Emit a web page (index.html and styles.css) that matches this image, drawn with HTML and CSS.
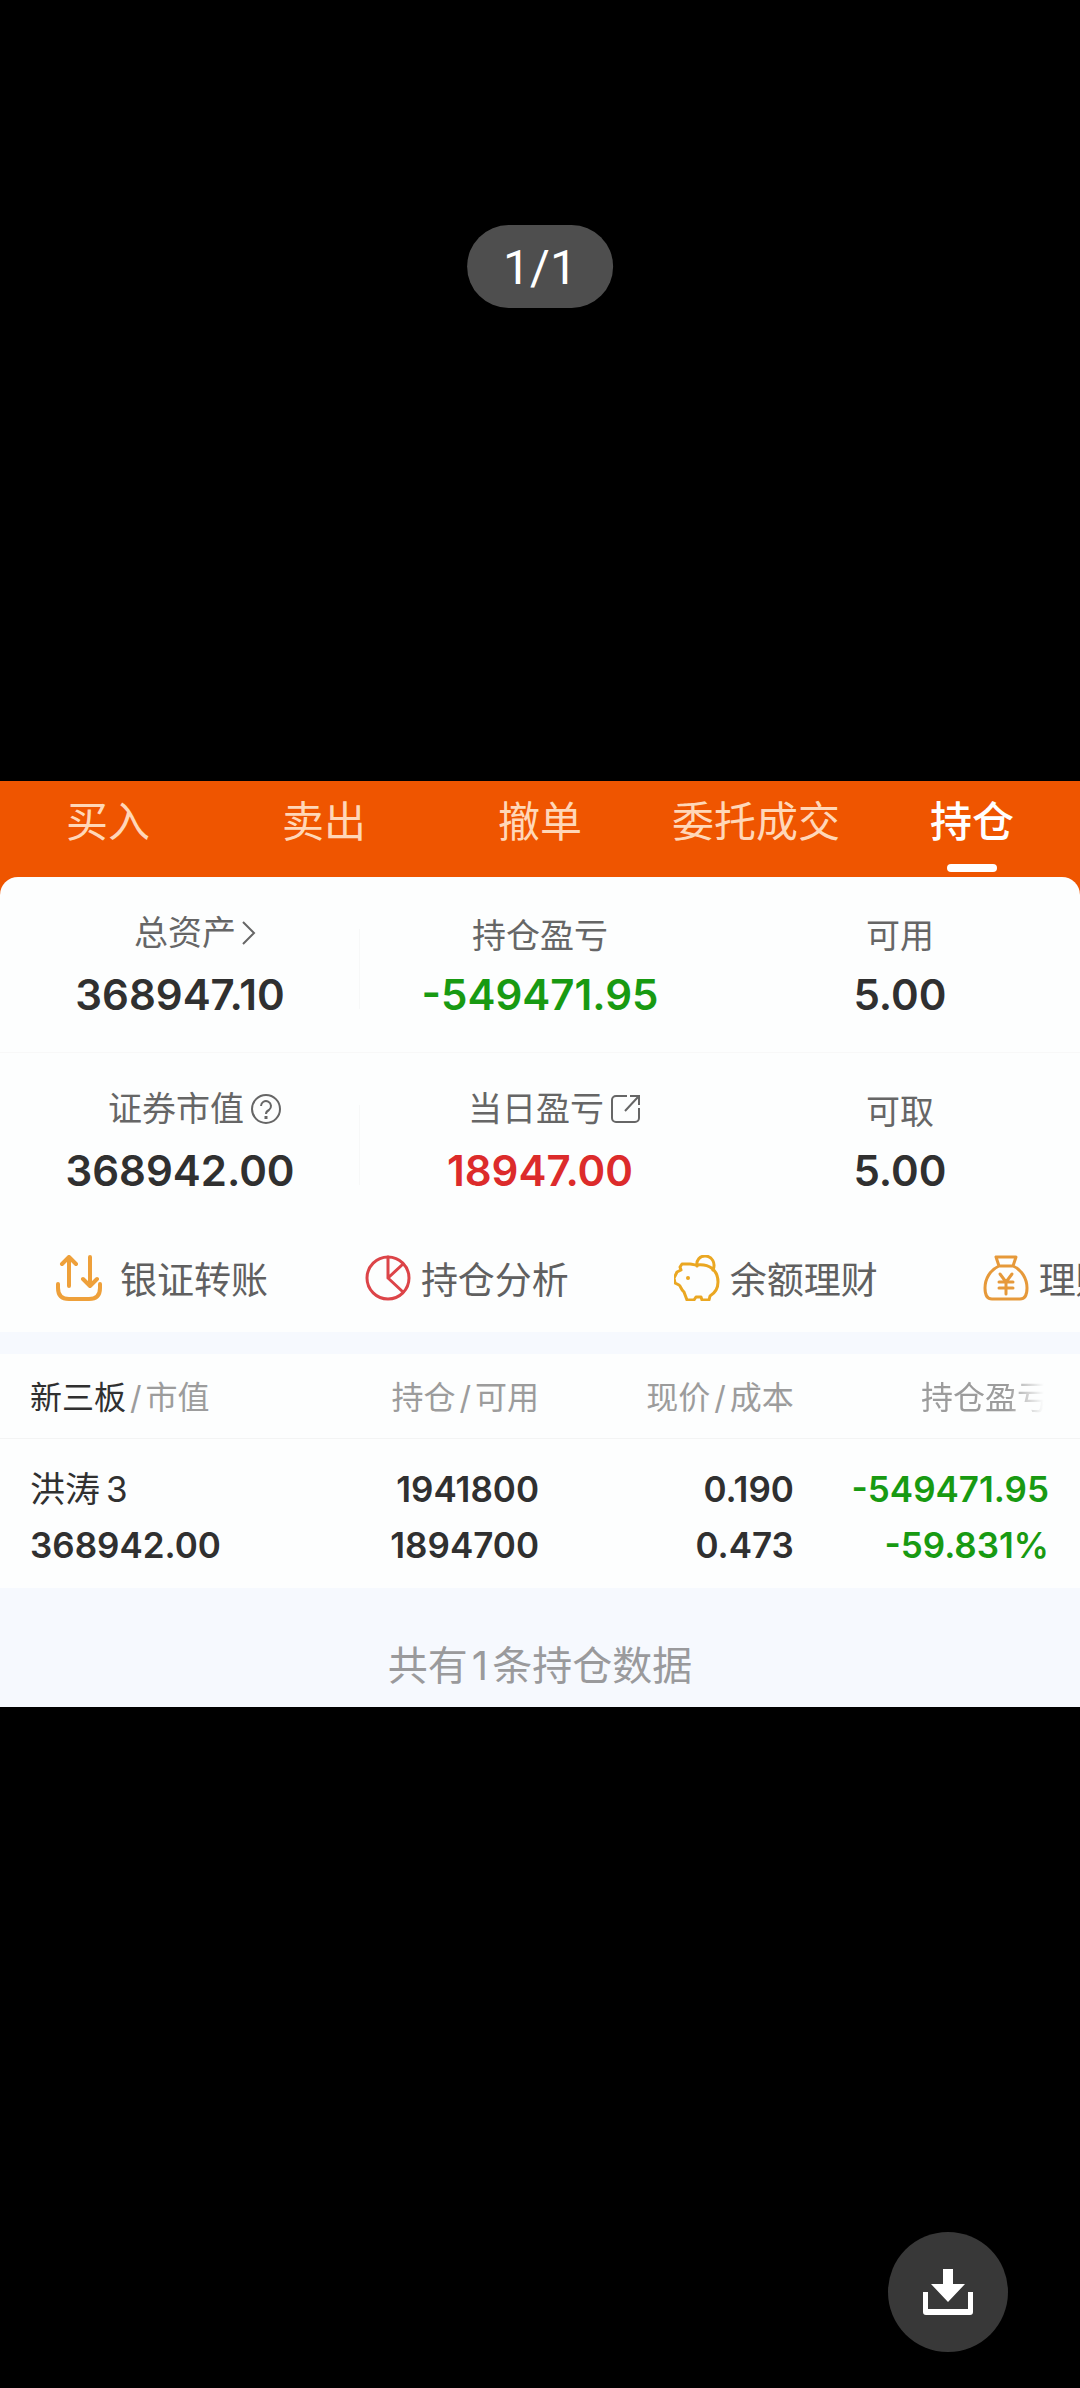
FILE: index.html
```html
<!DOCTYPE html>
<html lang="zh-CN">
<head>
<meta charset="utf-8">
<meta name="viewport" content="width=device-width, initial-scale=1">
<title>持仓</title>
<link rel="stylesheet" href="styles.css">
</head>
<body>
<main class="viewer">
  <div class="counter">1/1</div>

  <article class="panel">
    <nav class="tabs">
      <button class="tab" type="button">买入</button>
      <button class="tab" type="button">卖出</button>
      <button class="tab" type="button">撤单</button>
      <button class="tab" type="button">委托成交</button>
      <button class="tab tab-active" type="button" aria-current="page">持仓</button>
    </nav>

    <section class="card">
      <dl class="stats">
        <div class="stat stat-divided">
          <dt class="stat-label stat-label-icon">总资产
            <svg class="icon-chevron" viewBox="0 0 14 24" aria-hidden="true"><path d="M1 1l11 11L1 23"/></svg>
          </dt>
          <dd class="stat-value">368947.10</dd>
        </div>
        <div class="stat">
          <dt class="stat-label">持仓盈亏</dt>
          <dd class="stat-value down">-549471.95</dd>
        </div>
        <div class="stat">
          <dt class="stat-label">可用</dt>
          <dd class="stat-value">5.00</dd>
        </div>
      </dl>
      <dl class="stats stats-second">
        <div class="stat stat-divided">
          <dt class="stat-label stat-label-icon">证券市值
            <svg class="icon-small" viewBox="0 0 32 32" aria-hidden="true"><circle cx="16" cy="16" r="14"/><path d="M11 13a5 5 0 1 1 8 4c-2 1-3 2-3 4"/><path class="dot" d="M16 23v3"/></svg>
          </dt>
          <dd class="stat-value">368942.00</dd>
        </div>
        <div class="stat">
          <dt class="stat-label stat-label-icon">当日盈亏
            <svg class="icon-small" viewBox="0 0 32 32" aria-hidden="true"><path d="M17 3H6a4 4 0 0 0-4 4v18a4 4 0 0 0 4 4h19a4 4 0 0 0 4-4V15M20 3h9v9M28 4L15 18"/></svg>
          </dt>
          <dd class="stat-value up">18947.00</dd>
        </div>
        <div class="stat">
          <dt class="stat-label">可取</dt>
          <dd class="stat-value">5.00</dd>
        </div>
      </dl>

      <div class="actions">
        <button class="action action-transfer" type="button">
          <svg class="action-icon" viewBox="0 0 46 46" aria-hidden="true"><path d="M13 31V3M6 9l7-7 7 7M34 2v28M27 24l7 7 7-7"/><path d="M2 29v4q0 11 11 11h20q11 0 11-11v-4"/></svg>
          银证转账
        </button>
        <button class="action action-analysis" type="button">
          <svg class="action-icon" viewBox="0 0 46 46" aria-hidden="true"><circle cx="23" cy="23" r="21"/><path d="M23 2v21L38 9M23 23l15 14"/></svg>
          持仓分析
        </button>
        <button class="action action-savings" type="button">
          <svg class="action-icon" viewBox="0 0 46 46" aria-hidden="true"><path d="M23 11C22 5 26 1 31 1c7 0 11 7 8 14"/><path d="M8 9h8c3 0 4 1 6 1 13-2 22 5 22 17 0 7-3 11-8 14l-1 4h-7l-1-3h-5l-2 3h-7l-3-8c-3-2-3-6-5-7l-4-2-1-5 3-6 4-2-1-3z"/><circle class="eye" cx="14" cy="23" r="2"/></svg>
          余额理财
        </button>
        <button class="action action-wealth" type="button">
          <svg class="action-icon" viewBox="0 0 46 46" aria-hidden="true"><path d="M13 2h20l-3 9H16zM16 11C7 15 2 24 2 33c0 7 2 11 7 11h28c5 0 7-4 7-11 0-9-5-18-14-22"/><path class="yen" d="M17 19l6 8 6-8M23 27v12M16 27h14M16 33h14"/></svg>
          理财
        </button>
      </div>
    </section>

    <table class="holdings">
      <colgroup><col class="col-name"><col class="col-qty"><col class="col-price"><col class="col-profit"></colgroup>
      <thead>
        <tr>
          <th scope="col"><span class="market">新三板</span><span class="slash">/</span>市值</th>
          <th scope="col">持仓<span class="slash">/</span>可用</th>
          <th scope="col">现价<span class="slash">/</span>成本</th>
          <th scope="col"><span class="fading">持仓盈亏</span></th>
        </tr>
      </thead>
      <tbody>
        <tr>
          <td><div class="name">洪涛<span class="suffix">3</span></div><div>368942.00</div></td>
          <td><div>1941800</div><div>1894700</div></td>
          <td><div>0.190</div><div>0.473</div></td>
          <td class="down"><div>-549471.95</div><div>-59.831%</div></td>
        </tr>
      </tbody>
    </table>

    <p class="summary">共有<span class="count">1</span>条持仓数据</p>
  </article>

  <button class="download" type="button" aria-label="下载">
    <svg class="download-icon" viewBox="0 0 50 46" aria-hidden="true"><path d="M20 0h10v15h12L25 33 8 15h12z"/><path d="M0 23h5v17h40V23h5v20q0 3-3 3H3q-3 0-3-3z"/></svg>
  </button>
</main>
</body>
</html>
```
FILE: styles.css
```css
* {
  box-sizing: border-box;
}

body {
  margin: 0;
  background: #000;
  color: #303030;
  font-family: Inter, "Noto Sans CJK SC", sans-serif;
}

button {
  margin: 0;
  padding: 0;
  border: 0;
  background: none;
  color: inherit;
  font: inherit;
}

svg {
  flex: none;
  fill: none;
  stroke: currentColor;
}

.viewer {
  position: relative;
  display: flex;
  flex-direction: column;
  justify-content: center;
  min-height: 100vh;
  padding-top: 100px;
}

.counter {
  position: absolute;
  top: 225px;
  left: 50%;
  transform: translateX(-50%);
  padding: 2px 36px 0;
  border-radius: 42px;
  background: #4e4e4e;
  color: #fff;
  font: 48px/81px Roboto, sans-serif;
}

.panel {
  overflow: hidden;
  background: #ef5500;
}

/* Tabs */
.tabs {
  display: flex;
}

.tab {
  flex: 1;
  display: flex;
  flex-direction: column;
  align-items: center;
  gap: 12px;
  padding: 11px 0 5px;
  color: #ffd7b8;
  font-size: 42px;
  line-height: 60px;
  white-space: nowrap;
}

.tab::after {
  content: "";
  width: 50px;
  height: 8px;
  border-radius: 4px;
}

.tab-active {
  color: #fff;
  font-weight: 500;
}

.tab-active::after {
  background: #fff;
}

/* Account figures */
.card {
  border-radius: 18px 18px 0 0;
  background: #fdfefe;
}

.stats {
  display: grid;
  grid-template-columns: repeat(3, 1fr);
  margin: 0;
  padding: 39px 0 31px;
  border-bottom: 1px solid #f8f8f8;
}

.stats-second {
  border-bottom: 0;
}

.stat {
  display: flex;
  flex-direction: column;
  align-items: center;
  gap: 13px;
}

.stat-divided {
  background: linear-gradient(#f7f8f8, #f7f8f8) right center / 1px 80px no-repeat;
}

.stat-label {
  display: flex;
  align-items: center;
  gap: 6px;
  height: 40px;
  color: #666;
  font-size: 34px;
  line-height: 40px;
  white-space: nowrap;
}

.stat-label-icon {
  padding: 0 0 6px 30px;
}

.icon-chevron {
  width: 14px;
  height: 24px;
  stroke-width: 2;
}

.icon-small {
  width: 32px;
  height: 32px;
  stroke-width: 2;
}

.dot {
  stroke-width: 3;
}

.stat-value {
  margin: 0;
  font-size: 42px;
  font-weight: 600;
  line-height: 52px;
}

.down {
  color: #189a12;
}

.up {
  color: #dc2b2b;
}

/* Shortcuts */
.actions {
  display: flex;
  overflow: hidden;
  padding: 20px 0 24px;
}

.action {
  flex: 0 0 28.6%;
  display: flex;
  align-items: center;
  gap: 10px;
  height: 60px;
  padding-left: 56px;
  color: #606060;
  font-size: 37px;
  white-space: nowrap;
}

.action-icon {
  width: 46px;
  height: 46px;
  stroke-width: 3;
  stroke-linecap: round;
  stroke-linejoin: round;
}

.action-transfer {
  gap: 18px;
}

.action-transfer .action-icon {
  color: #eea03a;
  stroke-width: 4;
}

.action-analysis .action-icon {
  color: #dc4448;
}

.action-savings .action-icon {
  color: #eaa722;
}

.action-wealth .action-icon {
  color: #e6993a;
}

.yen {
  stroke-width: 3;
}

.eye {
  fill: currentColor;
  stroke: none;
}

/* Holdings */
.holdings {
  width: 100%;
  border-top: 22px solid #f6f9fe;
  border-collapse: separate;
  border-spacing: 0;
  table-layout: fixed;
  background: #fdfefe;
}

.col-name {
  width: 25%;
}

.col-qty {
  width: 25%;
}

.col-price {
  width: 23.6%;
}

.holdings th,
.holdings td {
  padding: 0 1px 0 0;
  text-align: right;
  white-space: nowrap;
}

.holdings th {
  height: 85px;
  padding-bottom: 2px;
  border-bottom: 1px solid #f3f4f4;
  color: #9c9c9c;
  font-size: 32px;
  font-weight: 400;
}

.holdings td {
  padding-top: 22px;
  padding-bottom: 15px;
  font-size: 35px;
  font-weight: 600;
  line-height: 56px;
}

.holdings th:first-child,
.holdings td:first-child {
  padding-left: 30px;
  text-align: left;
}

.holdings th:last-child,
.holdings td:last-child {
  padding-right: 31px;
}

.market {
  color: #303030;
}

.slash {
  padding: 0 4px;
}

.fading {
  -webkit-mask-image: linear-gradient(90deg, #000 68%, transparent 96%);
  mask-image: linear-gradient(90deg, #000 68%, transparent 96%);
}

.name {
  font-weight: 400;
}

.suffix {
  padding-left: 6px;
}

.summary {
  margin: 0;
  padding: 53px 0 16px;
  background: #f6f9fe;
  color: #9a9a9c;
  font-size: 40px;
  line-height: 50px;
  text-align: center;
}

.count {
  padding: 0 4px;
}

/* Save button */
.download {
  position: absolute;
  right: 72px;
  bottom: 36px;
  display: grid;
  place-items: center;
  width: 120px;
  height: 120px;
  border-radius: 50%;
  background: #383838;
  color: #fff;
}

.download-icon {
  width: 50px;
  height: 46px;
  fill: currentColor;
  stroke: none;
}
```
